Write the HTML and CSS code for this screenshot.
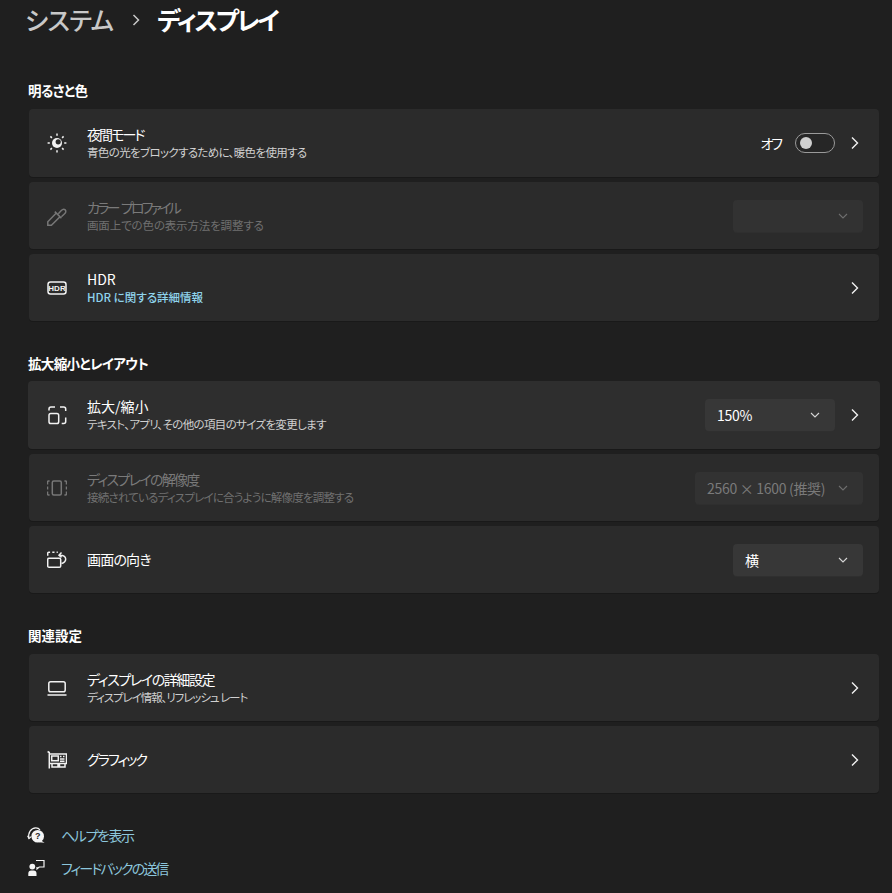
FILE: index.html

```html
<!DOCTYPE html>
<html lang="ja">
<head>
  <meta charset="UTF-8" />
  <meta name="viewport" content="width=device-width, initial-scale=1.0"/>
  <title>ディスプレイ</title>
  <link rel="stylesheet" href="styles.css">
</head>
<body>
  <header class="crumbs">
    <span class="crumb-parent">システム</span>
    <svg class="crumb-sep" viewBox="0 0 10 14"><path d="M2.5 2l5 5-5 5"/></svg>
    <h1>ディスプレイ</h1>
  </header>

  <section class="group">
    <h2 class="tight-xs">明るさと色</h2>
    <div class="cards">
      <div class="card tall">
        <svg class="icon" viewBox="0 0 20 20">
          <circle class="solid" cx="10" cy="10" r="5"/>
          <circle class="cut" cx="11.2" cy="8.8" r="2.6"/>
          <path d="M10 .6v2.2M10 17.2v2.2M.6 10h2.2M17.2 10h2.2M3.4 3.4l1.5 1.5M15.1 15.1l1.5 1.5M3.4 16.6l1.5-1.5M15.1 4.9l1.5-1.5"/>
        </svg>
        <div class="text">
          <div class="title tight-l">夜間モード</div>
          <div class="sub tight-xs">青色の光をブロックするために、暖色を使用する</div>
        </div>
        <span class="toggle-label">オフ</span>
        <span class="toggle"><span class="knob"></span></span>
        <svg class="chevron" viewBox="0 0 8 14"><path d="M1 1.5L6.5 7 1 12.5"/></svg>
      </div>

      <div class="card disabled">
        <svg class="icon" viewBox="0 0 20 20">
          <path d="M.8 19.2v-3.4L9.3 7l3.7 3.7L4.4 19.2zM7.8 5.6l6.6 6.6M11.3 7.8l3-3.2c1.1-1.2 2.8-1.7 3.9-.7s.6 2.8-.6 3.9l-3.2 3"/>
        </svg>
        <div class="text">
          <div class="title tight-xl">カラー プロファイル</div>
          <div class="sub tight-min">画面上での色の表示方法を調整する</div>
        </div>
        <div class="select">
          <span class="select-value"></span>
          <svg class="caret" viewBox="0 0 10 6"><path d="M1 1l4 4 4-4"/></svg>
        </div>
      </div>

      <div class="card">
        <svg class="icon" viewBox="0 0 20 20">
          <rect x="1" y="4" width="18" height="12" rx="2.5"/>
          <text class="hdr-mark" x="10" y="12.8">HDR</text>
        </svg>
        <div class="text">
          <div class="title">HDR</div>
          <div class="sub link">HDR に関する詳細情報</div>
        </div>
        <svg class="chevron" viewBox="0 0 8 14"><path d="M1 1.5L6.5 7 1 12.5"/></svg>
      </div>
    </div>
  </section>

  <section class="group snug">
    <h2 class="tight-xs">拡大縮小とレイアウト</h2>
    <div class="cards">
      <div class="card tall hover">
        <svg class="icon" viewBox="0 0 20 20">
          <rect x="2" y="8.5" width="9.7" height="10" rx="1.8"/>
          <path d="M2 5.5V4a2 2 0 0 1 2-2h4M13 2h3.7a2 2 0 0 1 2 2v2M18.7 12.5v4a2 2 0 0 1-2 2h-2"/>
        </svg>
        <div class="text">
          <div class="title">拡大/縮小</div>
          <div class="sub tight-xs">テキスト、アプリ、その他の項目のサイズを変更します</div>
        </div>
        <div class="select">
          <span class="select-value">150%</span>
          <svg class="caret" viewBox="0 0 10 6"><path d="M1 1l4 4 4-4"/></svg>
        </div>
        <svg class="chevron" viewBox="0 0 8 14"><path d="M1 1.5L6.5 7 1 12.5"/></svg>
      </div>

      <div class="card disabled">
        <svg class="icon" viewBox="0 0 20 20">
          <rect x="5.3" y="3" width="9" height="14" rx="1.5"/>
          <path d="M2.6 3H1.5a1 1 0 0 0-1 1v2.5M.5 8.5v3M.5 13.5V16a1 1 0 0 0 1 1h1.1M17.4 3h1.1a1 1 0 0 1 1 1v2.5M19.5 8.5v3M19.5 13.5V16a1 1 0 0 1-1 1h-1.1"/>
        </svg>
        <div class="text">
          <div class="title tight-ml">ディスプレイの解像度</div>
          <div class="sub tight-s">接続されているディスプレイに合うように解像度を調整する</div>
        </div>
        <div class="select wide">
          <span class="select-value">2560 × 1600 (推奨)</span>
          <svg class="caret" viewBox="0 0 10 6"><path d="M1 1l4 4 4-4"/></svg>
        </div>
      </div>

      <div class="card">
        <svg class="icon" viewBox="0 0 20 20">
          <rect x=".7" y="8.3" width="13" height="8.9" rx="1.3"/>
          <path d="M.7 5.8V3.2a1 1 0 0 1 1-1h1.4M5.3 2.2h2.2M9.6 2.2h1.2M14.5 2.6L12 5.2l2.5 2.2M12.3 5.2c4-.4 6.4 1.4 6.4 3.9 0 2.2-2 3.9-4.2 4.4"/>
        </svg>
        <div class="text">
          <div class="title tight-s">画面の向き</div>
        </div>
        <div class="select">
          <span class="select-value">横</span>
          <svg class="caret" viewBox="0 0 10 6"><path d="M1 1l4 4 4-4"/></svg>
        </div>
      </div>
    </div>
  </section>

  <section class="group">
    <h2>関連設定</h2>
    <div class="cards">
      <div class="card">
        <svg class="icon" viewBox="0 0 20 20">
          <rect x="1.8" y="3.7" width="16.4" height="10" rx="1.8"/>
          <path d="M.5 17h19"/>
        </svg>
        <div class="text">
          <div class="title tight-m">ディスプレイの詳細設定</div>
          <div class="sub tight-sm">ディスプレイ情報、リフレッシュ レート</div>
        </div>
        <svg class="chevron" viewBox="0 0 8 14"><path d="M1 1.5L6.5 7 1 12.5"/></svg>
      </div>

      <div class="card">
        <svg class="icon" viewBox="0 0 20 20">
          <path d="M.6 1.5l1.7 1v16M2.3 4h17.2v9.4H2.3M5 13.4V17h6v-3.6M12.5 13.4V17h5.5v-3.6"/>
          <rect x="4.7" y="6" width="6.6" height="4.7"/>
          <path d="M13 6.5h1.5M16 6.5h1.5M13 9h4.5M13 11.2h4.5"/>
        </svg>
        <div class="text">
          <div class="title tight-l">グラフィック</div>
        </div>
        <svg class="chevron" viewBox="0 0 8 14"><path d="M1 1.5L6.5 7 1 12.5"/></svg>
      </div>
    </div>
  </section>

  <footer class="help">
    <div class="help-row">
      <svg class="help-icon" viewBox="0 0 18 18">
        <path d="M2 12.5C.6 7 4 1.8 8.8 1.8c2 0 3.3.8 4.2 2"/>
        <path d="M.6 9.8L2 12.6l2.2-2"/>
        <circle class="solid" cx="10.7" cy="10.3" r="6.3"/>
        <path class="solid" d="M14 14.5l3.6 2.3-5.4-.6z"/>
        <text class="help-mark" x="10.7" y="13.4">?</text>
      </svg>
      <span class="help-link tight-m">ヘルプを表示</span>
    </div>
    <div class="help-row">
      <svg class="help-icon" viewBox="0 0 18 18">
        <circle class="solid" cx="5.3" cy="7.6" r="2.9"/>
        <path class="solid" d="M1.3 17v-2.6a3 3 0 0 1 3-3h2.2a3 3 0 0 1 3 3V17z"/>
        <path d="M9 1.5h8V8h-4.8L10 10V8"/>
      </svg>
      <span class="help-link tight-l">フィードバックの送信</span>
    </div>
  </footer>
</body>
</html>
```

FILE: styles.css

```css
:root {
  --fondo: #1f1f1f;
  --card: #2b2b2b;
  --link: #8fd3ec;
}
* {
  box-sizing: border-box;
}
body {
  margin: 0;
  padding: 0 13px 0 29px;
  background-color: var(--fondo);
  color: #fff;
  font-family: "Noto Sans CJK JP", "Noto Sans", sans-serif;
  font-feature-settings: "palt";
}
svg {
  fill: none;
  stroke: currentColor;
  flex: none;
}
/* kana in the original font sets much narrower than Noto */
.tight-min { letter-spacing: -0.15px; }
.tight-xs { letter-spacing: -0.65px; }
.tight-s { letter-spacing: -0.8px; }
.tight-sm { letter-spacing: -1.05px; }
.tight-m { letter-spacing: -1.4px; }
.tight-ml { letter-spacing: -1.7px; }
.tight-l { letter-spacing: -1.9px; }
.tight-xl { letter-spacing: -2.8px; word-spacing: 3px; }
.crumbs {
  display: flex;
  align-items: center;
  height: 38px;
  margin: 0 0 42px -4px;
  font-size: 25px;
  line-height: 38px;
}
.crumb-parent {
  color: #c8c8c8;
  font-weight: 500;
  letter-spacing: -0.7px;
}
.crumb-sep {
  width: 10px;
  height: 14px;
  margin: 2px 16px 0 18px;
  color: #c8c8c8;
  stroke-width: 1.5;
}
.crumbs h1 {
  margin: 0;
  font: inherit;
  font-weight: 700;
  letter-spacing: -2.3px;
}
.group {
  margin-bottom: 32px;
}
.group:last-of-type {
  margin-bottom: 0;
}
.group h2 {
  margin: 0 0 9px -1px;
  font-size: 13.5px;
  line-height: 20px;
  font-weight: 700;
}
.group.snug h2 {
  margin-bottom: 8px;
}
.cards {
  display: flex;
  flex-direction: column;
  gap: 5px;
}
.card {
  display: flex;
  align-items: center;
  height: 67px;
  padding: 0 16px 0 18px;
  background: var(--card);
  border-radius: 4px;
  box-shadow: 0 1px 0 #191919;
}
.card.tall {
  height: 68px;
}
.card.hover {
  margin: 0 -1px;
  padding: 0 17px 0 19px;
  background: #2e2e2e;
}
.icon {
  width: 20px;
  height: 20px;
  margin-right: 20px;
  stroke-width: 1.5;
  color: #f2f2f2;
}
.solid {
  fill: currentColor;
  stroke: none;
}
.cut {
  fill: var(--card);
  stroke: none;
}
.hdr-mark {
  fill: currentColor;
  stroke: none;
  font-family: "Liberation Sans", sans-serif;
  font-size: 8px;
  font-weight: 700;
  text-anchor: middle;
}
.text {
  flex: 1;
  min-width: 0;
}
.title {
  font-size: 14px;
  line-height: 19px;
  color: #fff;
}
.sub {
  font-size: 11.5px;
  line-height: 17px;
  color: #d0d0d0;
}
.sub.link {
  color: var(--link);
  font-weight: 500;
}
.toggle-label {
  font-size: 14px;
  letter-spacing: -2px;
  margin-right: 14px;
}
.toggle {
  display: flex;
  align-items: center;
  width: 40px;
  height: 20px;
  padding-left: 4px;
  border: 1px solid #9a9a9a;
  border-radius: 10px;
  background: #262626;
}
.knob {
  width: 12px;
  height: 12px;
  border-radius: 50%;
  background: #cfcfcf;
}
.chevron {
  width: 8px;
  height: 14px;
  margin: 0 4px 0 16px;
  stroke-width: 1.4;
  color: #f2f2f2;
}
.select {
  display: flex;
  align-items: center;
  justify-content: space-between;
  width: 130px;
  height: 32px;
  padding: 0 15px 0 12px;
  background: #373737;
  border-radius: 4px;
  box-shadow: 0 1px 0 #2f2f2f;
  font-size: 14px;
}
.select.wide {
  width: 168px;
}
.select-value {
  letter-spacing: -0.3px;
}
.caret {
  width: 10px;
  height: 6px;
  color: #d6d6d6;
  stroke-width: 1.1;
}
.disabled .icon {
  color: #777;
}
.disabled .title {
  color: #7a7a7a;
}
.disabled .sub {
  color: #707070;
}
.disabled .select {
  background: #323232;
  color: #7a7a7a;
}
.disabled .caret {
  color: #6f6f6f;
}
.help {
  margin-top: 25px;
}
.help-row {
  display: flex;
  align-items: center;
  gap: 16px;
  height: 33px;
  margin-left: -2px;
}
.help-icon {
  width: 18px;
  height: 18px;
  stroke-width: 1.2;
  color: #f5f5f5;
}
.help-mark {
  fill: #1f1f1f;
  stroke: none;
  font-family: "Liberation Sans", sans-serif;
  font-size: 9px;
  font-weight: 700;
  text-anchor: middle;
}
.help-link {
  font-size: 14px;
  color: #8cc6dc;
}
```
